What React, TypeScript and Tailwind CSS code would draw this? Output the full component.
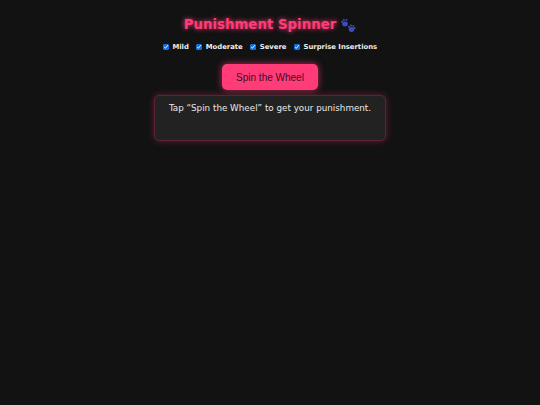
function Check({ label }: { label: string }) {
  return (
    <label className="flex items-center gap-[3.5px]">
      <input type="checkbox" defaultChecked className="m-0 h-[6px] w-[6px] accent-[#0b6fe8]" />
      <span>{label}</span>
    </label>
  );
}

function Paws() {
  return (
    <svg width="16" height="16" viewBox="0 0 16 16" className="ml-[4px] mt-[2px] blur-[0.5px]" fill="#3d4cb8">
      <ellipse cx="5" cy="6" rx="2.8" ry="2.4" />
      <circle cx="2" cy="3.8" r="1" />
      <circle cx="3.8" cy="2" r="1" />
      <circle cx="6.4" cy="2" r="1" />
      <ellipse cx="11.5" cy="11.5" rx="2.8" ry="2.4" />
      <circle cx="9" cy="8.8" r="1" />
      <circle cx="11" cy="7.4" r="1" />
      <circle cx="13.4" cy="8" r="1" />
      <circle cx="14.6" cy="10" r="1" />
    </svg>
  );
}

export default function App() {
  return (
    <div className="flex min-h-[405px] flex-col items-center bg-[#121212] font-['DejaVu_Sans',sans-serif] text-[#eeeeee]">
      <h1 className="mt-[15px] flex h-[20px] items-center text-[13.35px] font-bold text-[#ff3c78] [text-shadow:0_0_5px_#ff3c78]">
        Punishment Spinner
        <Paws />
      </h1>
      <div className="mt-[6.5px] flex h-[12px] items-center gap-[7.5px] text-[6.85px] font-bold">
        <Check label="Mild" />
        <Check label="Moderate" />
        <Check label="Severe" />
        <Check label="Surprise Insertions" />
      </div>
      <button className="mt-[10.5px] h-[26px] w-[96px] rounded-[5px] bg-[#ff3c78] font-['Liberation_Sans',sans-serif] text-[10px] text-[#3a1024] shadow-[0_0_7px_#ff3c78aa]">
        Spin the Wheel
      </button>
      <div className="mt-[5px] h-[46px] w-[232px] rounded-[5px] border border-[#5c2238] bg-[#222222] pt-[6px] text-center text-[8.77px] text-[#e8e8e8] shadow-[0_0_7px_#ff3c7855]">
        Tap “Spin the Wheel” to get your punishment.
      </div>
    </div>
  );
}
